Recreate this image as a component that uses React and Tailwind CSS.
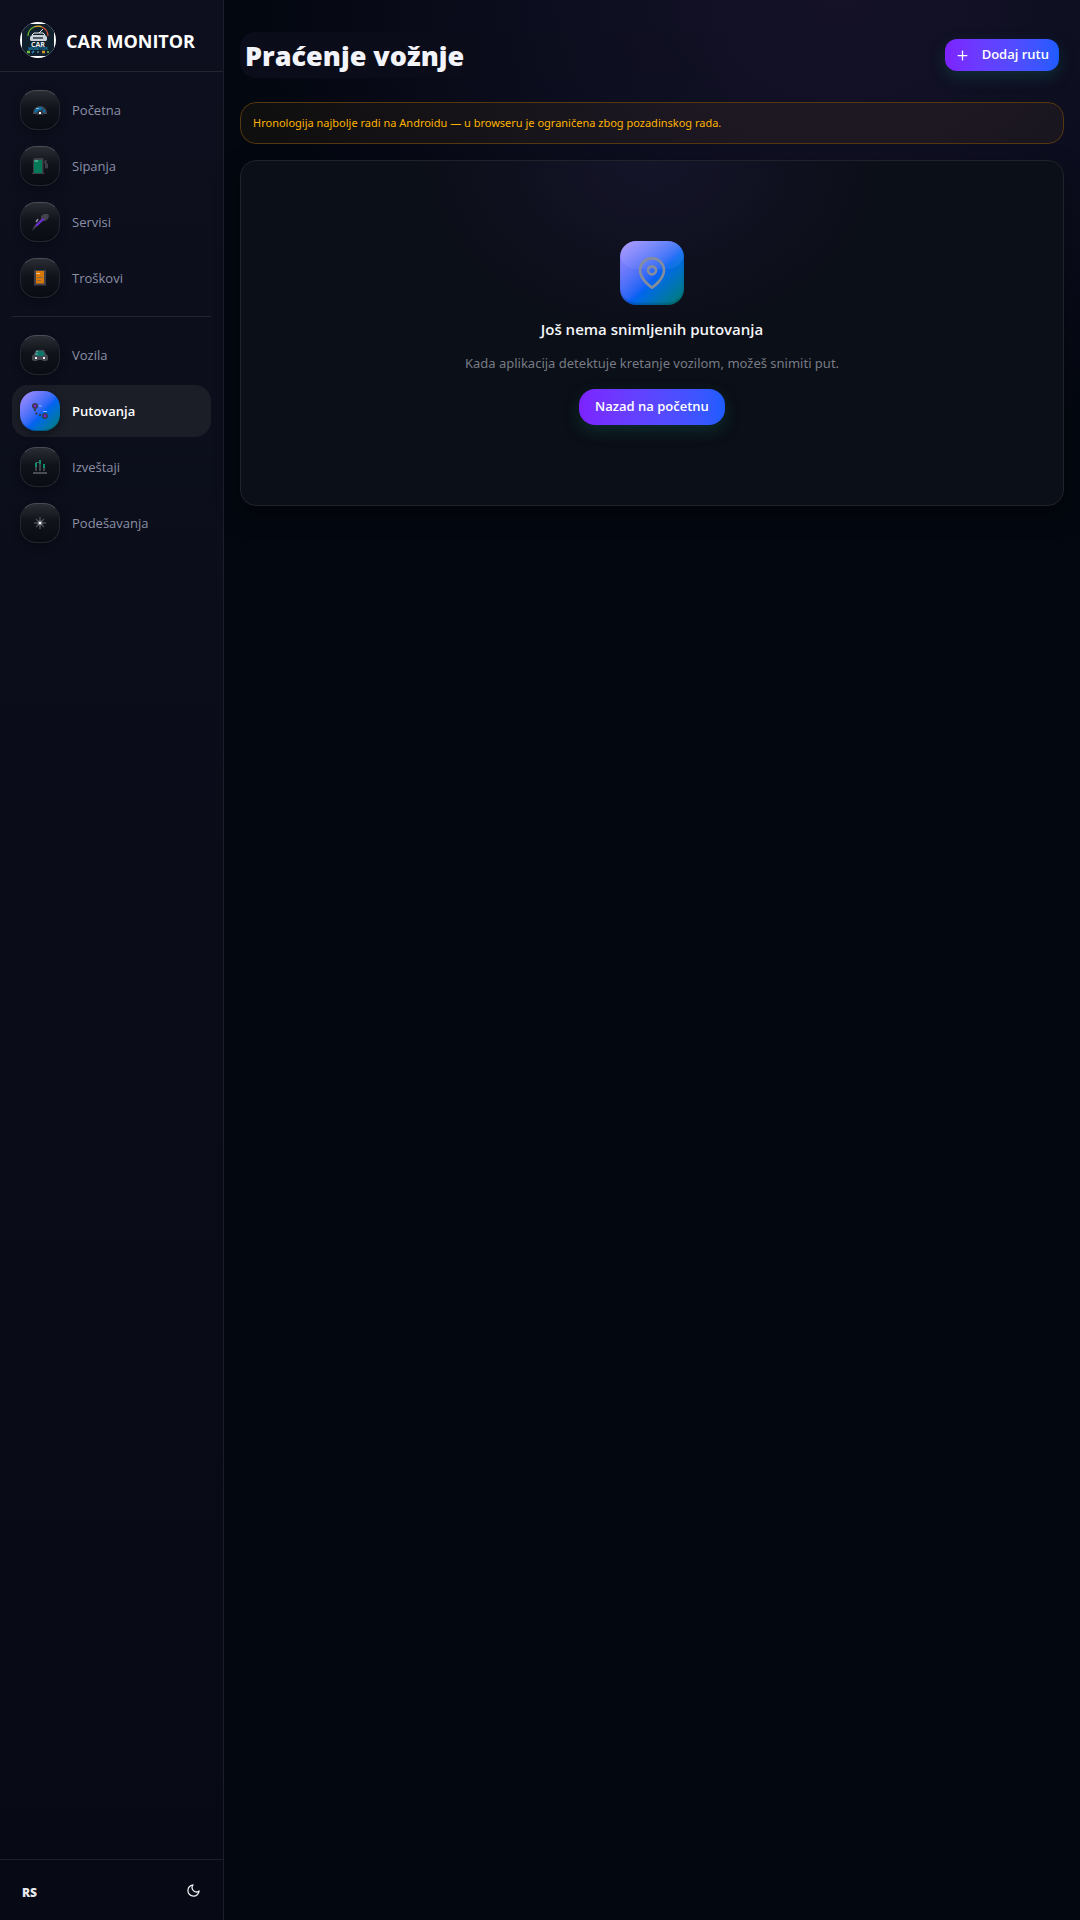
import React from 'react';
import { FiMapPin, FiMoon, FiPlus } from 'react-icons/fi';
import clsx from 'clsx';

const HomeIcon = () => (
  <svg viewBox="0 0 18 18" className="size-[18px]" aria-hidden="true">
    <path d="M2 12a7 7 0 0 1 14 0v1H2z" fill="#44464f" />
    <path d="M3.500 11.500a5.500 5.500 0 0 1 11 0z" fill="#0870a8" />
    <path d="M9 12l4-5" stroke="#3b3f49" strokeWidth="1.5" />
    <path d="M5 7.500h3" stroke="#8fb8cf" strokeWidth="1" />
    <path d="M6 14v-2a3 3 0 0 1 6 0v2z" fill="#33363f" />
    <rect x="8" y="11" width="2" height="2" fill="#fff" />
  </svg>
);

const FuelIcon = () => (
  <svg viewBox="0 0 18 18" className="size-[18px]" aria-hidden="true">
    <path d="M2 2.500L3.500 1h8l1 1v14h1v1H1v-1h1z" fill="#3c3e48" />
    <rect x="3" y="3" width="8" height="13" fill="#047857" />
    <path d="M3.500 4h3.500" stroke="#9bd0bd" strokeWidth="1" />
    <path d="M13 5l2-2v3l1.500 1v4h-2V7l-1-1" fill="#3c3e48" stroke="#3c3e48" strokeWidth="1" />
  </svg>
);

const ServiceIcon = () => (
  <svg viewBox="0 0 18 18" className="size-[18px]" aria-hidden="true">
    <path d="M1 18l2-5 7-7V3l3-2h4l1 2-1 3-3 2h-2l-7 6z" fill="#44434d" />
    <path d="M5 13l5-5 3-2" stroke="#6d28d9" strokeWidth="2" fill="none" />
    <path d="M5 9l2-3" stroke="#8d8b99" strokeWidth="1.5" />
  </svg>
);

const CostsIcon = () => (
  <svg viewBox="0 0 18 18" className="size-[18px]" aria-hidden="true">
    <path d="M3 1h12v16l-1-1-1 1-1-1-1 1-1-1-1 1-1-1-1 1-1-1-1 1-1-1-1 1z" fill="#3f4049" />
    <path d="M5 2h8v13l-1-1-1 1-1-1-1 1-1-1-1 1-1-1-1 1z" fill="#d97706" />
    <path d="M5 4.500h4" stroke="#f3c483" strokeWidth="1" />
    <path d="M6 8.500h6M6 11.500h4" stroke="#8a6a43" strokeWidth="1" />
  </svg>
);

const CarIcon = () => (
  <svg viewBox="0 0 18 18" className="size-[18px]" aria-hidden="true">
    <path d="M1 10l2-2 2-4h8l2 4 2 2v4l-2 1h-3l-1-1H7l-1 1H3l-2-1z" fill="#45474f" />
    <path d="M4 8.500L6 5h6l2 3.500L12 10H6z" fill="#0f766e" />
    <path d="M5 6l2-1M4 8h3" stroke="#6fb3ab" strokeWidth="1" />
    <rect x="4" y="11" width="2" height="2" fill="#f4f4f5" />
    <rect x="12" y="11" width="2" height="2" fill="#f4f4f5" />
  </svg>
);

const TripsIcon = () => (
  <svg viewBox="0 0 18 18" className="size-[18px]" aria-hidden="true">
    <circle cx="4" cy="4" r="2.200" fill="#7e22ce" stroke="#373c4d" strokeWidth="1.600" />
    <path d="M4 7v3l2 2 3 1h3" stroke="#373c4d" strokeWidth="2" strokeDasharray="2 2" fill="none" />
    <circle cx="14" cy="14" r="2.200" fill="#7e22ce" stroke="#373c4d" strokeWidth="1.600" />
    <path d="M8 4h3M12 9.500h4" stroke="#8bb4ff" strokeWidth="1" />
  </svg>
);

const ReportsIcon = () => (
  <svg viewBox="0 0 18 18" className="size-[18px]" aria-hidden="true">
    <path d="M5 5v8M9 3v10M13 7v6" stroke="#3f424b" strokeWidth="2" />
    <path d="M5 5v4M9 2v4M13 6v4" stroke="#0b8f68" strokeWidth="2" />
    <path d="M4.500 4.500h4" stroke="#4f5a5f" strokeWidth="1" />
    <path d="M2 15h14" stroke="#4b4c56" strokeWidth="2" />
  </svg>
);

const SettingsIcon = () => (
  <svg viewBox="0 0 18 18" className="size-[18px]" aria-hidden="true">
    <path d="M9 3v12M3 9h12M5 5l8 8M13 5l-8 8" stroke="#494a54" strokeWidth="1.500" />
    <circle cx="9" cy="9" r="2.500" fill="#777782" />
    <rect x="8" y="8" width="2" height="2" fill="#fff" />
  </svg>
);

const Logo = () => (
  <svg viewBox="0 0 36 36" className="size-9 rounded-full" aria-hidden="true">
    <rect width="36" height="36" fill="#fff" />
    <rect x="2" y="2" width="32" height="32" rx="7" fill="#10202d" />
    <path d="M8 14a10 10 0 0 1 6-9" stroke="#6fb82d" strokeWidth="1.200" fill="none" />
    <path d="M14 5a10 10 0 0 1 8 0" stroke="#e0b42d" strokeWidth="1.200" fill="none" />
    <path d="M22 5a10 10 0 0 1 6 9" stroke="#d9542b" strokeWidth="1.200" fill="none" />
    <path d="M19 11l4-4" stroke="#dfe5ea" strokeWidth="1" />
    <path d="M12 13l2-2h9l2 2" fill="none" stroke="#eef2f5" strokeWidth="1" />
    <path d="M10 15l2-2h13l2 2v3l-1 1H11l-1-1z" fill="#c9d2da" />
    <path d="M13 16h10" stroke="#24343f" strokeWidth="1.500" />
    <text x="18" y="25" textAnchor="middle" fontSize="7" fontWeight="700" fill="#e8edf1">CAR</text>
    <text x="18" y="28" textAnchor="middle" fontSize="4" fontWeight="700" fill="#1785b5">MONITOR</text>
    <path d="M7 30h3" stroke="#73c043" strokeWidth="2.500" />
    <path d="M12 31l2-2" stroke="#2c91c9" strokeWidth="1.500" />
    <path d="M17 30h2" stroke="#496473" strokeWidth="2" />
    <path d="M22 30h3" stroke="#d39a2b" strokeWidth="2.500" />
    <path d="M27 30h2" stroke="#5f9c40" strokeWidth="2" />
  </svg>
);

const mainLinks = [
  { label: 'Početna', icon: HomeIcon },
  { label: 'Sipanja', icon: FuelIcon },
  { label: 'Servisi', icon: ServiceIcon },
  { label: 'Troškovi', icon: CostsIcon },
];

const moreLinks = [
  { label: 'Vozila', icon: CarIcon },
  { label: 'Putovanja', icon: TripsIcon, active: true },
  { label: 'Izveštaji', icon: ReportsIcon },
  { label: 'Podešavanja', icon: SettingsIcon },
];

const NavItem = ({ label, icon: Icon, active }) => (
  <a
    href="#"
    aria-current={active ? 'page' : undefined}
    className={clsx(
      'flex items-center gap-3 rounded-2xl px-2 py-1.5 text-[13px] leading-5',
      active ? 'bg-[#1b1e27] font-semibold text-white' : 'text-[#8b90a6]'
    )}
  >
    <span
      className={clsx(
        'flex size-10 shrink-0 items-center justify-center rounded-2xl',
        active
          ? 'bg-linear-135 from-[#ab8fff] via-[#0b62f5] via-55% to-[#047b68] shadow-[0_3px_8px_rgba(0,0,0,0.4),inset_0_-1px_1px_rgba(0,0,0,0.25)]'
          : 'border border-[#23262e] border-t-[#4b4d54] bg-linear-to-b from-[#2b2d34] via-[#10131a] via-45% to-[#090d13] shadow-[0_3px_8px_rgba(0,0,0,0.3)]'
      )}
    >
      <Icon />
    </span>
    <span>{label}</span>
  </a>
);

const Sidebar = () => (
  <aside className="flex w-56 shrink-0 flex-col border-r border-[#1c1e29] bg-linear-to-b from-[#0d0f1e] via-[#0a0d18] via-50% to-[#070914]">
    <div className="flex items-center gap-2.5 border-b border-[#23252f] px-5 pt-[22px] pb-[13px]">
      <Logo />
      <span className="pt-0.5 text-lg leading-6 font-bold whitespace-nowrap text-white">CAR MONITOR</span>
    </div>

    <nav className="flex flex-1 flex-col gap-1 p-3">
      {mainLinks.map((link) => (
        <NavItem key={link.label} {...link} />
      ))}
      <hr className="my-2 border-[#23252f]" />
      {moreLinks.map((link) => (
        <NavItem key={link.label} {...link} />
      ))}
    </nav>

    <div className="flex h-[61px] items-center justify-between border-t border-[#1d1f2a] px-5">
      <button type="button" className="px-0.5 pt-1.5 text-xs font-extrabold text-[#e8e9ee]">RS</button>
      <button type="button" aria-label="Tamna tema" className="px-0.5 text-[#f1f2f6]">
        <FiMoon size={15} />
      </button>
    </div>
  </aside>
);

const EmptyState = () => (
  <section className="flex flex-col items-center rounded-2xl border border-[#20232b] bg-[#0b0f17] bg-[radial-gradient(ellipse_240px_180px_at_50%_0%,#15152a_0%,#0f101e_60%,transparent_100%)] px-4 py-20 text-center shadow-[0_8px_24px_rgba(0,0,0,0.35)]">
    <div className="relative flex size-16 items-center justify-center overflow-hidden rounded-2xl bg-linear-135 from-[#a58bff] via-[#0b62f5] via-55% to-[#047b68] shadow-[inset_0_-2px_2px_rgba(0,0,0,0.2)]">
      <span className="absolute inset-x-0 top-0 h-7 rounded-b-2xl bg-linear-to-b from-white/15 to-white/5" />
      <FiMapPin size={32} className="relative text-[#858d9d]" />
    </div>
    <h2 className="mt-3 text-[15px] leading-6 font-semibold text-[#f5f6fa]">Još nema snimljenih putovanja</h2>
    <p className="mt-3 font-['Noto_Sans',sans-serif] text-[13px] leading-5 text-[#777b86]">
      Kada aplikacija detektuje kretanje vozilom, možeš snimiti put.
    </p>
    <button
      type="button"
      className="mt-4 h-9 rounded-2xl bg-linear-to-r from-[#7c22ff] to-[#1b5cff] px-4 text-[13px] font-semibold text-white shadow-[0_6px_16px_rgba(16,130,110,0.25)]"
    >
      Nazad na početnu
    </button>
  </section>
);

const App = () => (
  <div className="flex min-h-screen bg-[#03070f] font-['Open_Sans','Noto_Sans',sans-serif]">
    <Sidebar />
    <main className="flex min-w-0 flex-1 flex-col gap-4 bg-[radial-gradient(ellipse_600px_460px_at_72%_0%,#151228_0%,#0d0e20_45%,transparent_100%)] bg-no-repeat px-4 pt-8">
      <header className="mb-2 flex items-center justify-between rounded-2xl bg-linear-to-r from-[#0c0d1b] to-transparent to-60% px-[5px]">
        <h1 className="pt-0.5 text-[27px] leading-[44px] font-extrabold text-[#f3f4fa]">Praćenje vožnje</h1>
        <button
          type="button"
          className="flex h-8 items-center gap-3 rounded-xl bg-linear-to-r from-[#7c22ff] to-[#1b5cff] px-2.5 text-[13px] font-semibold whitespace-nowrap text-white shadow-[0_6px_16px_rgba(16,130,110,0.25)]"
        >
          <FiPlus size={15} />
          Dodaj rutu
        </button>
      </header>

      <p role="status" className="rounded-2xl border border-[#56370f] bg-[#f59e0b]/6 px-3 py-3 font-['Noto_Sans',sans-serif] text-[11px] leading-4 text-[#fdb300]">
        Hronologija najbolje radi na Androidu — u browseru je ograničena zbog pozadinskog rada.
      </p>

      <EmptyState />
    </main>
  </div>
);

export default App;
